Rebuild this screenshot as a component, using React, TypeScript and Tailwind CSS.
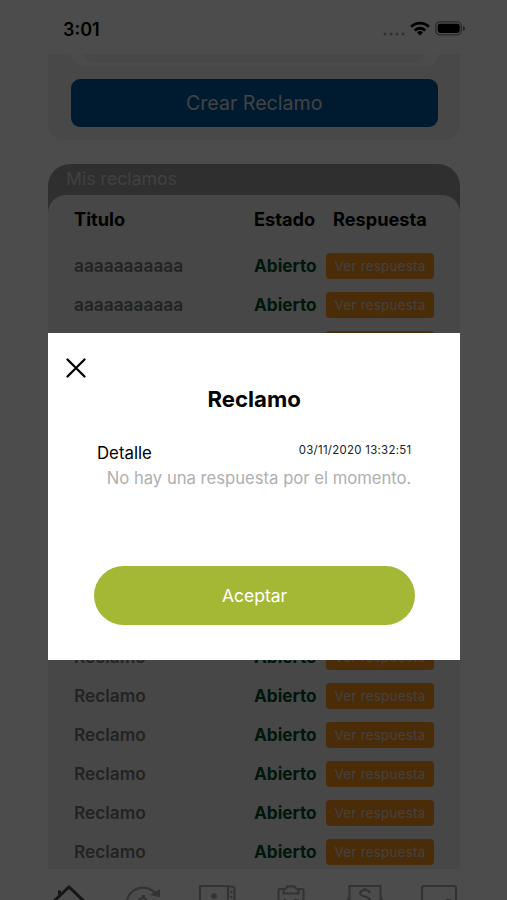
import type { ReactNode } from 'react';

const firstClaims = ['aaaaaaaaaaa', 'aaaaaaaaaaa', 'Reclamo'];
const lastClaims = ['Reclamo', 'Reclamo', 'Reclamo', 'Reclamo', 'Reclamo', 'Reclamo'];

function StatusBar() {
  return (
    <div className="flex h-[54px] shrink-0 items-center justify-between pt-[5px] pr-[41px] pl-[63px]">
      <span className="text-[18px] font-semibold leading-none text-black">3:01</span>
      <div className="-mt-[2px] flex items-center">
        <svg width="22" height="4" viewBox="0 0 22 4" className="mt-[10px]" fill="#a0a0a0">
          <circle cx="2" cy="2" r="1.5" />
          <circle cx="8" cy="2" r="1.5" />
          <circle cx="14" cy="2" r="1.5" />
          <circle cx="20" cy="2" r="1.5" />
        </svg>
        <svg width="20" height="15" viewBox="0 0 20 15" className="ml-[5px]" fill="none" stroke="#000" strokeWidth="2.8">
          <path d="M1.2 5.8a12.3 12.3 0 0 1 17.6 0" />
          <path d="M4.7 9.5a7.4 7.4 0 0 1 10.6 0" />
          <path d="M10 14.5 7 11.5a4.3 4.3 0 0 1 6 0Z" fill="#000" stroke="none" />
        </svg>
        <svg width="31" height="15" viewBox="0 0 31 15" className="ml-[5px]">
          <rect x="0.8" y="0.8" width="25.4" height="13" rx="4" fill="none" stroke="#8c8c8c" strokeWidth="1.3" />
          <rect x="2.7" y="2.7" width="22" height="9.2" rx="2.4" fill="#000" />
          <path d="M27.8 5v5c1.6-.6 2.2-1.5 2.2-2.5S29.4 5.6 27.8 5Z" fill="#777" />
        </svg>
      </div>
    </div>
  );
}

function ClaimRow({ title }: { title: string }) {
  return (
    <div className="flex h-[39.1px] shrink-0 items-center">
      <span className="w-[180px] text-[17.3px] font-semibold text-[#757575]">{title}</span>
      <span className="w-[72px] text-[17.2px] font-bold text-[#004d2b]">Abierto</span>
      <button className="h-[26px] w-[108px] rounded bg-[#fb931d] pt-[2px] text-[13.3px] tracking-[0.3px] whitespace-nowrap text-[#e4dcd0]">
        Ver respuesta
      </button>
    </div>
  );
}

function TabIcon({ children, color = '#aaa' }: { children: ReactNode; color?: string }) {
  return (
    <svg width="40" height="40" viewBox="0 0 40 40" className="shrink-0" fill="none" stroke={color} strokeWidth="2.2">
      {children}
    </svg>
  );
}

function TabBar() {
  return (
    <nav className="flex h-[31px] shrink-0 items-start gap-[34px] overflow-hidden pt-[15px] pl-[49px]">
      <TabIcon color="#4c4c4c">
        <path d="M3 19 20 3l17 16" strokeWidth="3" />
        <path d="M10.5 12V6.5" strokeWidth="3" />
      </TabIcon>
      <TabIcon>
        <path d="M3.5 20A16.5 16.5 0 0 1 33 10" />
        <path d="m27 11 10 2V5Z" fill="#aaa" stroke="none" />
        <path d="M24 17q-1-3-3-3v-2h-1v2q-4 0-4 4" />
      </TabIcon>
      <TabIcon>
        <path d="M3 34V2h28v32M31 2.500h4q2.500 0 2.500 3V34M33 8h2.500M33 13h2.500" />
        <circle cx="17" cy="12" r="2.800" fill="#aaa" stroke="none" />
      </TabIcon>
      <TabIcon>
        <path d="M13 5H9q-1.5 0-1.5 2v27h25V7q0-2-1.5-2h-4" />
        <path d="M12.5 9.500V5.500q3-.5 4-3.200h7q1 2.700 4 3.200v4ZM13 15l2.500 3M23 16h5" />
      </TabIcon>
      <TabIcon>
        <path d="M4.5 30V2h31v28M2 17l2.500-4M38 17l-2.500-4" />
        <path d="M25 9q-1-3-5-3t-5 3q0 2.500 5 3.500t5 4M20 4v3" />
      </TabIcon>
      <TabIcon>
        <rect x="3" y="2" width="34" height="34" rx="2" />
        <path d="M27 16h5" />
      </TabIcon>
    </nav>
  );
}

function ClaimModal() {
  return (
    <div className="absolute inset-0 bg-black/70 pt-[333px] pl-[48px]">
      <section className="flex h-[327.4px] w-[412.4px] flex-col bg-white">
        <button className="mt-[25px] ml-[18px] size-5" aria-label="Cerrar">
          <svg width="20" height="20" viewBox="0 0 20 20" stroke="#000" strokeWidth="2.2" strokeLinecap="round">
            <path d="m1.5 1.500 17 17M18.500 1.500l-17 17" />
          </svg>
        </button>
        <h2 className="mt-[6px] text-center text-[22.2px] leading-[30px] font-bold text-black">Reclamo</h2>
        <div className="mt-[27px] flex h-[24px] items-start justify-between pr-[49px] pl-[49px]">
          <span className="text-[16.8px] leading-[24px] text-black">Detalle</span>
          <span className="pt-px text-[11.4px] leading-[17px] tracking-[0.3px] text-[#222]">03/11/2020 13:32:51</span>
        </div>
        <p className="pr-[49px] text-right text-[16.65px] leading-[27px] whitespace-nowrap text-[#b0b0b0]">
          No hay una respuesta por el momento.
        </p>
        <button className="mt-[74px] ml-[46px] h-[59px] w-[321px] shrink-0 rounded-full bg-[#a5b836] pt-[2px] text-[17.5px] text-white">
          Aceptar
        </button>
      </section>
    </div>
  );
}

export default function App() {
  return (
    <div className="relative flex h-[900px] w-[507px] flex-col overflow-hidden bg-[#fdfdfd] font-[Inter,sans-serif]">
      <StatusBar />
      <div className="ml-[48px] flex h-[85.5px] w-[412.4px] shrink-0 flex-col rounded-b-2xl bg-[#f2f2f2] px-[22.5px]">
        <div className="h-[12px] rounded-b-xl bg-[#fbfbfb] px-[14px]">
          <div className="h-[9px] rounded-b-lg bg-[#f2f2f2]" />
        </div>
        <button className="mt-[13px] h-[47.5px] shrink-0 rounded-[9px] bg-[#005aa0] pt-[2px] text-[19.6px] text-[#dedede]">
          Crear Reclamo
        </button>
      </div>
      <div className="mt-[24.5px] ml-[48px] flex h-[705px] w-[412.4px] shrink-0 flex-col overflow-hidden rounded-t-[22px] bg-[linear-gradient(#9d9d9d_50px,#eee_50px)]">
        <h1 className="h-[30.5px] shrink-0 pl-[18px] text-[17.7px] leading-[30px] text-[#dadada]">Mis reclamos</h1>
        <div className="flex flex-1 flex-col rounded-t-[18px] bg-[#eee] pl-[26px]">
          <div className="flex h-[51.5px] shrink-0 items-center pb-[2px] text-[18.2px] font-bold text-black">
            <span className="w-[180px]">Titulo</span>
            <span className="w-[79px]">Estado</span>
            <span>Respuesta</span>
          </div>
          {firstClaims.map((title, i) => (
            <ClaimRow key={i} title={title} />
          ))}
          <div className="h-[273.7px] shrink-0" />
          {lastClaims.map((title, i) => (
            <ClaimRow key={i} title={title} />
          ))}
        </div>
      </div>
      <TabBar />
      <ClaimModal />
    </div>
  );
}
